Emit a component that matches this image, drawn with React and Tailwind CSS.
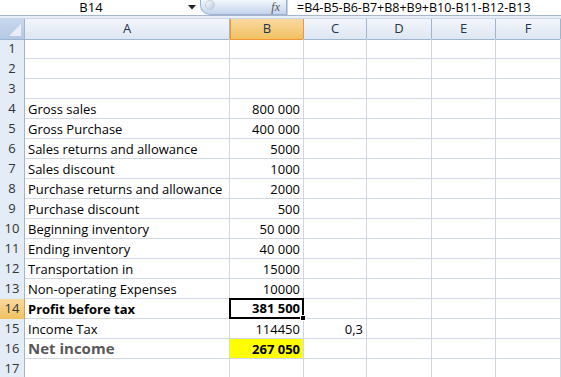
import React from 'react';

const cols = ['A', 'B', 'C', 'D', 'E', 'F'];

const rows = [
  { n: 1 },
  { n: 2 },
  { n: 3 },
  { n: 4, a: 'Gross sales', b: '800 000' },
  { n: 5, a: 'Gross Purchase', b: '400 000' },
  { n: 6, a: 'Sales returns and allowance', b: '5000' },
  { n: 7, a: 'Sales discount', b: '1000' },
  { n: 8, a: 'Purchase returns and allowance', b: '2000' },
  { n: 9, a: 'Purchase discount', b: '500' },
  { n: 10, a: 'Beginning inventory', b: '50 000' },
  { n: 11, a: 'Ending inventory', b: '40 000' },
  { n: 12, a: 'Transportation in', b: '15000' },
  { n: 13, a: 'Non-operating Expenses', b: '10000' },
  { n: 14, a: 'Profit before tax', b: '381 500', bold: true, selected: true },
  { n: 15, a: 'Income Tax', b: '114450', c: '0,3' },
  { n: 16, a: 'Net income', b: '267 050', net: true },
  { n: 17 },
];

const gridCols = 'grid grid-cols-[25px_205px_74px_63px_65px_64px_1fr]';

function FormulaBar() {
  return (
    <div className="flex h-[16px] items-stretch bg-white border-b border-[#a5b6cc]">
      <div className="w-[200px] relative flex items-center justify-center pr-[18px]">
        <span className="text-[13px] leading-[15px] text-black">B14</span>
        <svg className="absolute left-[188px] top-[5px]" width="8" height="5" viewBox="0 0 8 5">
          <path d="M0 0H8L4 4.5Z" fill="#222" />
        </svg>
      </div>
      <div className="w-[87px] rounded-bl-[10px] bg-gradient-to-b from-[#f2f6fc] via-[#dbe6f5] to-[#c4d4ec] border border-[#9cb1cf] border-t-0 relative flex items-center justify-end pr-[6px]">
        <div className="absolute left-[4px] top-[0px] w-[10px] h-[10px] rounded-full bg-gradient-to-br from-white to-[#b8c6da] border border-[#c4cedb]" />
        <span className="text-[12px] italic leading-[14px] text-[#555]" style={{ fontFamily: '"Liberation Serif", serif' }}>fx</span>
      </div>
      <div className="flex-1 flex items-center pl-[9px] border-l border-[#c6d2e1]">
        <span className="text-[12.5px] leading-[15px] text-black">=B4-B5-B6-B7+B8+B9+B10-B11-B12-B13</span>
      </div>
    </div>
  );
}

function HeaderRow() {
  return (
    <div className={`${gridCols} h-[20px]`}>
      <div className="relative bg-gradient-to-b from-[#c7d8ee] to-[#b4c9e6] border-r border-b border-[#9eb6ce]">
        <svg className="absolute right-[3px] bottom-[3px]" width="12" height="12" viewBox="0 0 12 12">
          <path d="M12 0V12H0Z" fill="#e9eef6" />
        </svg>
      </div>
      {cols.map((c) => (
        <div
          key={c}
          className={
            c === 'B'
              ? 'flex items-center justify-center bg-gradient-to-b from-[#f9d99f] to-[#f1c15f] border-b border-x border-[#f29536] text-[13px] text-[#20364f]'
              : 'flex items-center justify-center bg-gradient-to-b from-[#f3f6fb] to-[#dde6f2] border-r border-b border-[#9eb6ce] text-[13px] text-[#20364f]'
          }
        >
          {c}
        </div>
      ))}
      <div className="bg-gradient-to-b from-[#f3f6fb] to-[#dde6f2] border-b border-[#9eb6ce]" />
    </div>
  );
}

function Row({ r }) {
  const cell = 'border-r border-b border-[#d0d7e5] h-[20px] flex items-end pb-[1px] overflow-visible whitespace-nowrap';
  return (
    <div className={`${gridCols} h-[20px]`}>
      <div
        className={
          r.selected
            ? 'flex items-center justify-center bg-gradient-to-b from-[#f9d99f] to-[#f1c15f] border-r border-b border-[#f29536] text-[13px] text-[#333]'
            : 'flex items-center justify-center bg-[#e4ecf7] border-r border-b border-[#9eb6ce] text-[13px] text-[#333]'
        }
      >
        {r.n}
      </div>
      <div className={`${cell} pl-[3px]`}>
        {r.a && (
          <span
            className={
              r.net
                ? 'text-[15px] leading-[17px] font-bold text-[#595959]'
                : r.bold
                ? 'text-[13px] leading-[16px] font-bold text-black'
                : 'text-[13px] leading-[16px] text-black'
            }
          >
            {r.a}
          </span>
        )}
      </div>
      <div
        className={
          r.selected
            ? 'relative border-2 border-black ml-[-1px] mt-[-1px] h-[21px] flex items-end justify-end pr-[2px] pb-[1px]'
            : r.net
            ? `${cell} justify-end pr-[3px] bg-[#ffff00]`
            : `${cell} justify-end pr-[3px]`
        }
      >
        {r.b && (
          <span className={r.bold || r.net ? 'text-[13px] leading-[16px] font-bold text-black' : 'text-[13px] leading-[16px] text-black'}>
            {r.b}
          </span>
        )}
        {r.selected && <div className="absolute right-[-4px] bottom-[-4px] w-[6px] h-[6px] bg-black border border-white" />}
      </div>
      <div className={`${cell} justify-end pr-[3px]`}>
        {r.c && <span className="text-[13px] leading-[16px] text-black">{r.c}</span>}
      </div>
      <div className={cell} />
      <div className={cell} />
      <div className={cell} />
    </div>
  );
}

export default function App() {
  return (
    <div className="w-[561px] h-[377px] overflow-hidden bg-white" style={{ fontFamily: '"Open Sans", "Liberation Sans", sans-serif' }}>
      <FormulaBar />
      <div className="h-[3px] bg-[#e9eff8] border-b border-[#c9d6e8]" />
      <HeaderRow />
      {rows.map((r) => (
        <Row key={r.n} r={r} />
      ))}
    </div>
  );
}
